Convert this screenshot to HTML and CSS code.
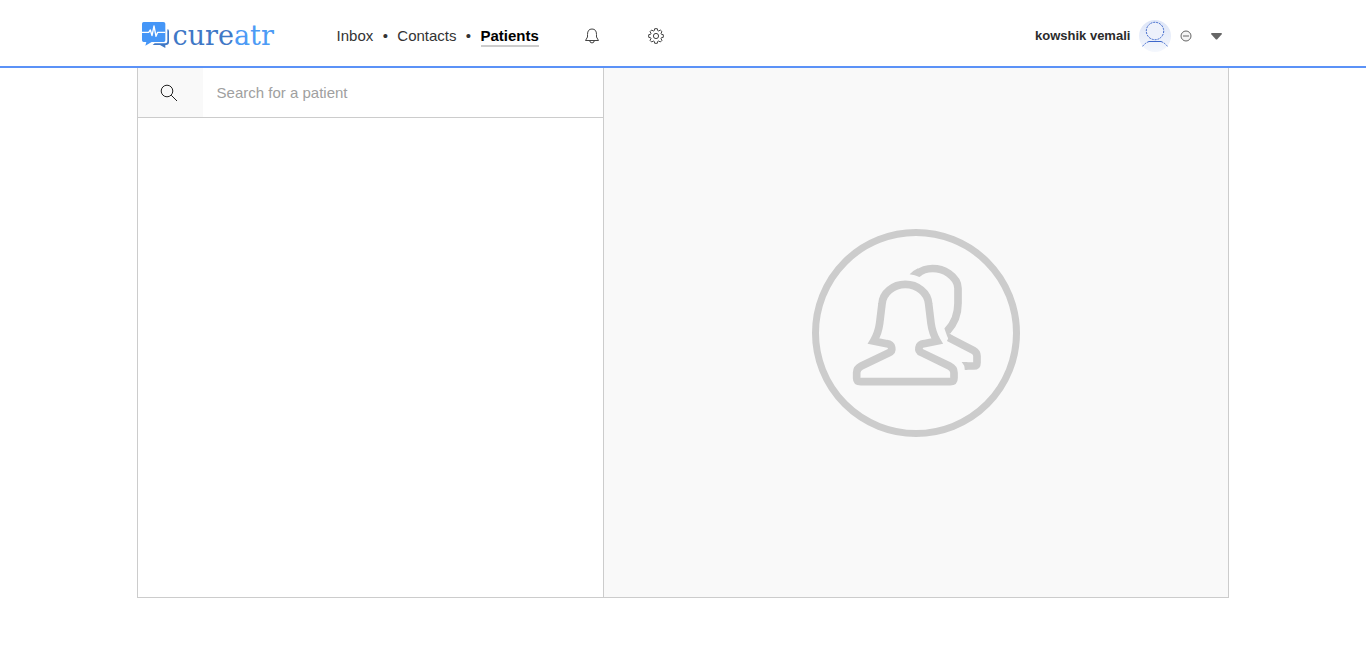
FILE: index.html
```html
<!DOCTYPE html>
<html lang="en">
<head>
<meta charset="utf-8">
<meta name="viewport" content="width=device-width, initial-scale=1">
<title>Cureatr - Patients</title>
<link rel="stylesheet" href="styles.css">
</head>
<body>
<header class="topbar">
  <div class="topbar-inner">
    <a class="logo" href="#">
      <svg class="logo-mark" viewBox="0 0 81 81" aria-hidden="true">
        <path class="mark-back" d="M75 21Q81 21 81 28V60Q81 69 72 69H70V78L54 69H32L38 64H70Q76 64 76 58V21Z"/>
        <path class="mark-front" d="M5 0H64Q70 0 70 5V55Q70 60 65 60H29L10 71L13 60H5Q0 60 0 55V5Q0 0 5 0Z"/>
        <path class="mark-pulse" d="M0 31H20L25 24L30 41L36 12L42 43L47 31H70"/>
      </svg>
      <span class="logo-text">cure<span class="logo-light">atr</span></span>
    </a>
    <nav class="nav">
      <a href="#">Inbox</a>
      <span class="dot">•</span>
      <a href="#">Contacts</a>
      <span class="dot">•</span>
      <a class="active" href="#">Patients</a>
    </nav>
    <div class="tools">
      <button class="icon-button" type="button" aria-label="Notifications">
        <svg class="icon" viewBox="0 0 16 16"><path d="M1.500 12.500H14.500M3.500 9V6.500Q3.500 1 8 1T12.500 6.500V9M3.500 9L1.500 12.500M12.500 9L14.500 12.500M6 13V14Q8 16 10 14V13"/></svg>
      </button>
      <button class="icon-button" type="button" aria-label="Settings">
        <svg class="icon" viewBox="0 0 16 16"><circle cx="8" cy="8" r="2.600"/><path d="M6.700 .7H9.300L9.700 2.600L10.700 3L12.300 2L14 3.700L13 5.300L13.400 6.300L15.300 6.700V9.300L13.400 9.700L13 10.700L14 12.300L12.300 14L10.700 13L9.700 13.400L9.300 15.300H6.700L6.300 13.400L5.300 13L3.700 14L2 12.300L3 10.700L2.600 9.700L.7 9.300V6.700L2.600 6.300L3 5.300L2 3.700L3.700 2L5.300 3L6.300 2.600Z"/></svg>
      </button>
    </div>
    <div class="account">
      <span class="name">kowshik vemali</span>
      <svg class="avatar" viewBox="0 0 32 32" role="img" aria-label="Profile picture">
        <defs><linearGradient id="sky" x1="0" y1="0" x2="0" y2="1"><stop offset="0" stop-color="#dde5f7"/><stop offset="1" stop-color="#f4f7fd"/></linearGradient></defs>
        <circle cx="16" cy="16" r="16" fill="url(#sky)"/>
        <circle class="head" cx="16" cy="11" r="8.700"/>
        <path class="neck" d="M10 21.500H22"/>
        <path class="shoulder" d="M10 21.500Q6 23 3.500 26.500M22 21.500Q26 23 28.500 26.500"/>
      </svg>
      <svg class="status" viewBox="0 0 12 12" role="img" aria-label="Status"><circle cx="6" cy="6" r="5"/><path d="M3 6H9"/></svg>
      <button class="menu-button" type="button" aria-label="Account menu">
        <svg class="caret" viewBox="0 0 11 7"><path d="M0 1Q0 0 1 0H10Q11 0 11 1L6.500 6Q5.500 7 4.500 6Z"/></svg>
      </button>
    </div>
  </div>
</header>
<main class="workspace">
  <section class="list-pane" aria-label="Patient list">
    <form class="search">
      <label class="search-label" for="patient-search" aria-label="Search for a patient">
        <svg class="search-icon" viewBox="0 0 18 18"><circle cx="7" cy="7" r="5.800"/><path d="M11.200 11.200L17 17"/></svg>
      </label>
      <input class="search-input" id="patient-search" type="text" placeholder="Search for a patient">
    </form>
  </section>
  <section class="detail-pane" aria-label="Patient details">
    <svg class="people" viewBox="24 27 624 624" aria-hidden="true">
      <circle class="ring" cx="336" cy="339" r="301.500"/>
      <path class="figure" d="M304 193C268 193 236 218 234 252L227 310C224 332 217 350 209 363L248 371C266 373 268 392 255 398L172 438Q158 445 158 458V474Q158 485 170 485H439Q450 485 450 474V458Q450 445 436 438L353 398C340 392 342 373 360 371L399 363C391 350 384 332 381 310L374 252C372 218 340 193 304 193Z"/>
      <path class="figure" d="M340 161C366 140 405 141 434 160C454 174 462 188 462 205V250C462 283 451 311 430 333"/>
      <path class="figure" d="M434 353L508 391Q519 397 519 408V428Q519 438 509 438H482"/>
      <path class="tip" d="M317 163Q327 152 342 145L353 165L346 171Q333 165 317 163ZM421 325L440 330L437 341L446 347L438 367Q428 348 421 325ZM473 426H490V450H484Q482 435 473 426Z"/>
    </svg>
  </section>
</main>
</body>
</html>
```
FILE: styles.css
```css
* {
  box-sizing: border-box;
}

body {
  margin: 0;
  background: #fff;
  color: #333;
  font-family: "Liberation Sans", Arial, sans-serif;
  font-size: 15px;
  line-height: 20px;
}

a {
  color: inherit;
  text-decoration: none;
}

button {
  display: flex;
  padding: 0;
  border: 0;
  background: none;
  cursor: pointer;
}

svg {
  display: block;
  flex: none;
}

.topbar {
  border-bottom: 2px solid #5b92f7;
}

.topbar-inner {
  display: flex;
  align-items: center;
  width: 80%;
  height: 66px;
  margin: 0 auto;
  padding: 6px 7px 0 5px;
}

.logo {
  display: flex;
  align-items: center;
  gap: 4px;
  width: 195px;
  padding-bottom: 2px;
}

.logo-mark {
  width: 27px;
  height: 27px;
}

.mark-back {
  fill: #3f78c6;
}

.mark-front {
  fill: #4596f7;
}

.mark-pulse {
  fill: none;
  stroke: #fff;
  stroke-width: 4;
  stroke-linejoin: round;
}

.logo-text {
  padding-top: 2px;
  color: #3f78c6;
  font-family: "DejaVu Serif", serif;
  font-size: 27px;
  line-height: 32px;
}

.logo-light {
  color: #4c9bf5;
}

.nav {
  display: flex;
  padding-top: 2px;
  line-height: 18px;
}

.dot {
  width: 24px;
  text-align: center;
}

.active {
  border-bottom: 2px solid #ccc;
  color: #000;
  font-weight: bold;
}

.tools {
  display: flex;
  gap: 48px;
  margin-left: 45px;
}

.icon {
  width: 16px;
  height: 16px;
  fill: none;
  stroke: #444;
  stroke-width: 1;
  stroke-linejoin: round;
}

.account {
  display: flex;
  align-items: center;
  margin-left: auto;
}

.name {
  color: #2b2b2b;
  font-size: 13px;
  font-weight: bold;
}

.avatar {
  width: 32px;
  height: 32px;
  margin: 0 9px;
}

.head,
.neck,
.shoulder {
  fill: none;
  stroke: #3e68cc;
  stroke-width: 1;
}

.head {
  fill: #edf1fb;
  stroke-dasharray: 2 1;
}

.shoulder {
  stroke-dasharray: 2 1;
}

.status {
  width: 12px;
  height: 12px;
  fill: #f4f4f4;
  stroke: #666;
  stroke-width: 1;
}

.menu-button {
  margin-left: 19px;
}

.caret {
  width: 11px;
  height: 7px;
  fill: #666;
}

.workspace {
  display: flex;
  width: 80%;
  height: calc(100vh - 136px);
  min-height: 320px;
  margin: 0 auto;
  border: 1px solid #ccc;
  border-top: 0;
}

.list-pane {
  width: 42.8%;
  border-right: 1px solid #ccc;
}

.search {
  display: flex;
  height: 50px;
  border-bottom: 1px solid #ccc;
}

.search-label {
  display: flex;
  align-items: center;
  justify-content: center;
  width: 65px;
  padding-right: 2px;
  background: #f9f9f9;
}

.search-icon {
  width: 18px;
  height: 18px;
  fill: none;
  stroke: #222;
  stroke-width: 1;
}

.search-input {
  flex: 1;
  min-width: 0;
  padding: 0 14px;
  border: 0;
  outline: 0;
  background: #fff;
  color: #333;
  font: inherit;
}

.search-input::placeholder {
  color: #a0a0a0;
  opacity: 1;
}

.detail-pane {
  display: flex;
  flex: 1;
  align-items: center;
  justify-content: center;
  background: #f9f9f9;
}

.people {
  width: 208px;
  height: 208px;
}

.ring,
.figure {
  fill: none;
  stroke: #ccc;
}

.ring {
  stroke-width: 21;
}

.figure {
  stroke-width: 23;
}

.tip {
  fill: #ccc;
}
```
